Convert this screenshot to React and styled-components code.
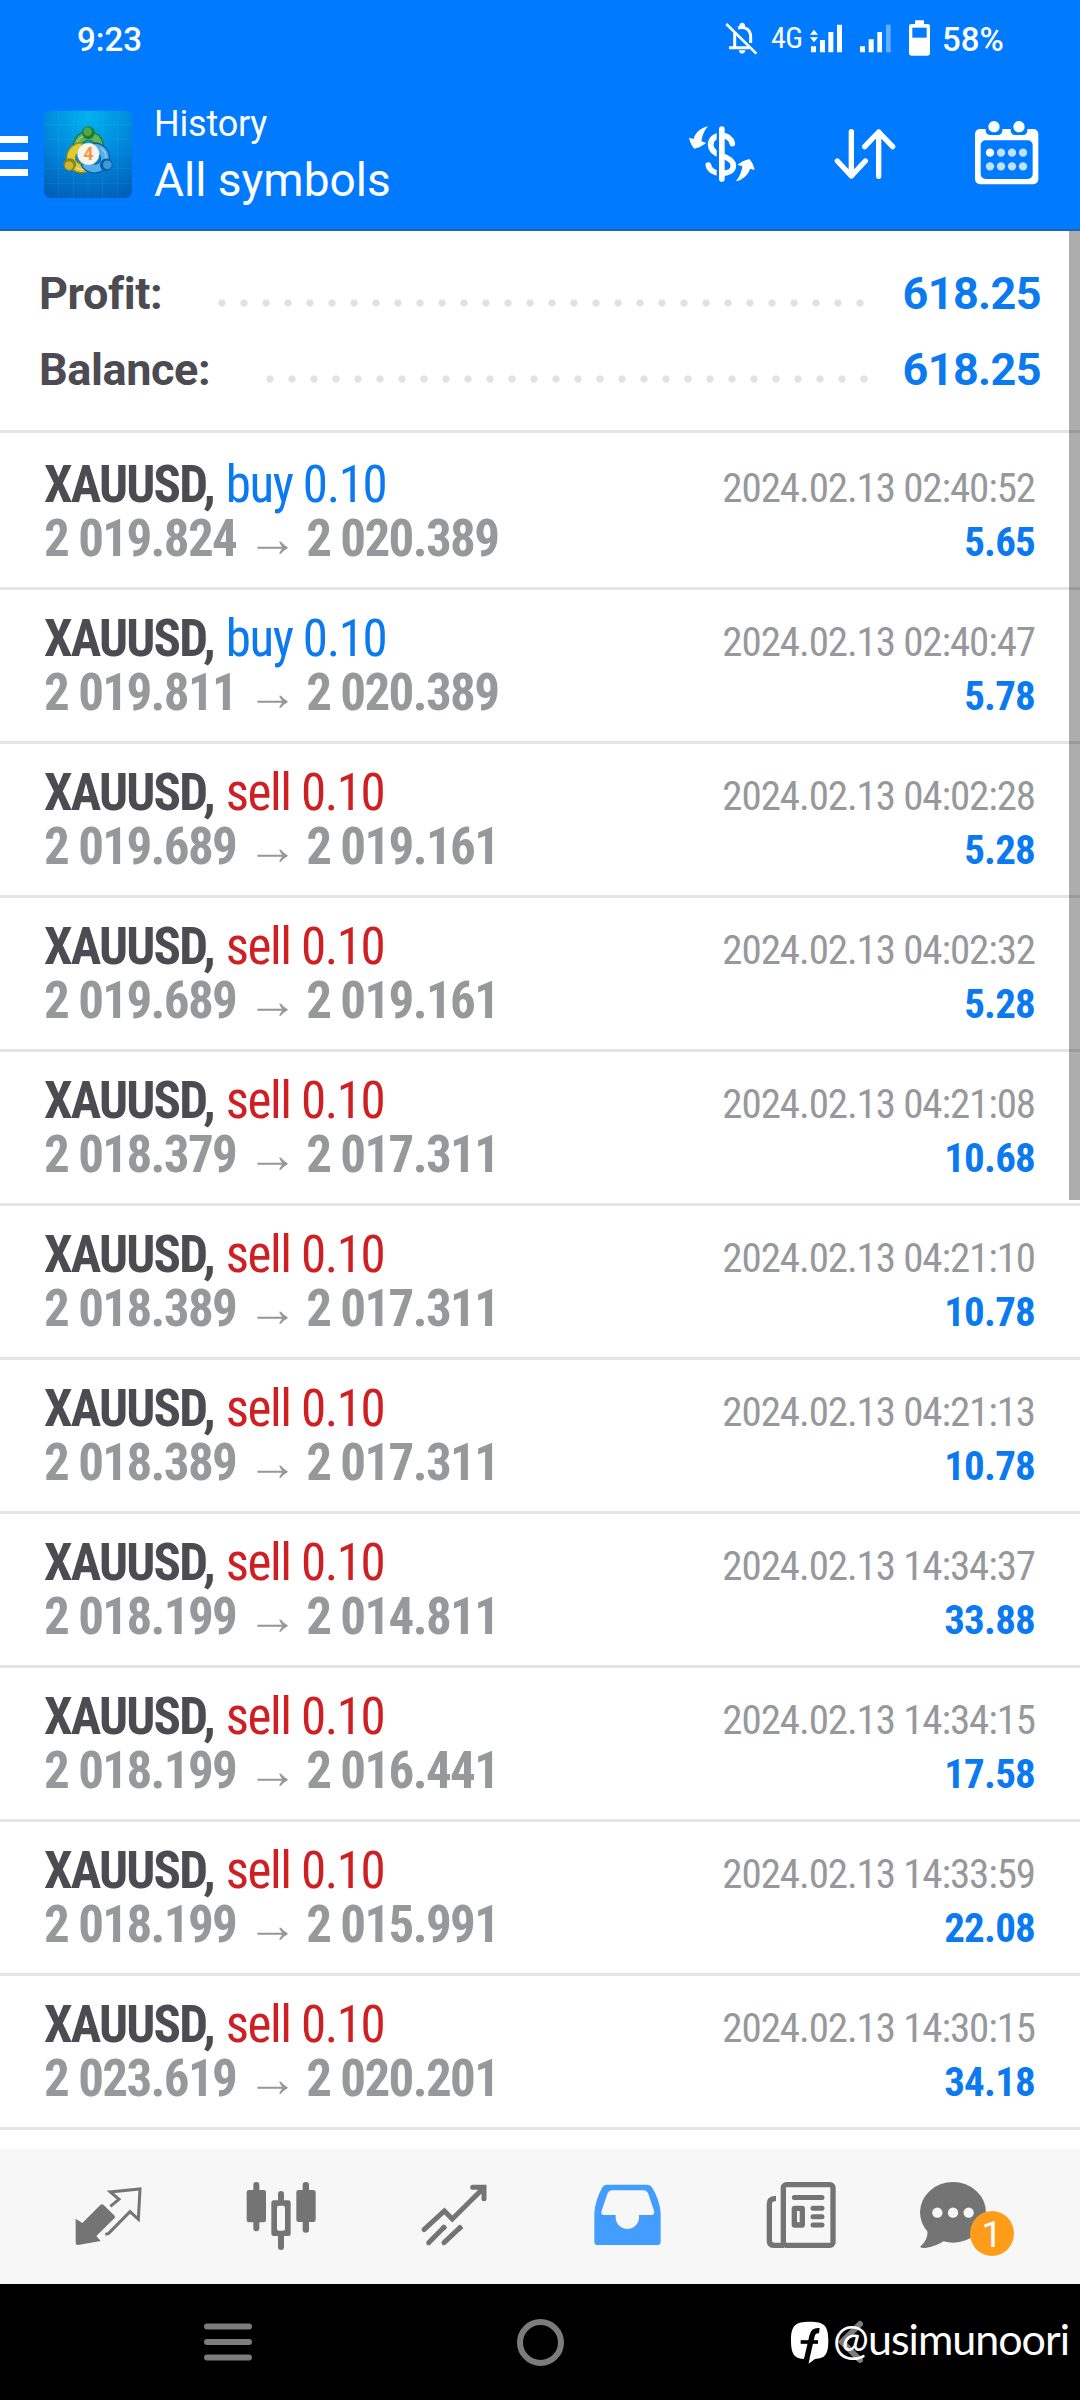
import React from "react"
import styled, { createGlobalStyle } from "styled-components"

const GlobalStyle = createGlobalStyle`
  :root {
    --primary: #007aff;
    --profit: #0b7af0;
    --sell: #ce1f23;
    --dark: #4c4b51;
    --muted: #97989c;
    --line: #e4e4e4;
    --tabIcon: #747474;
  }
  * {
    box-sizing: border-box;
  }
  body {
    margin: 0;
    background: #000;
    font-family: Roboto, "Liberation Sans", sans-serif;
  }
  svg {
    display: block;
    flex: none;
  }
`

const Screen = styled.div`
  position: relative;
  display: flex;
  flex-direction: column;
  width: 1080px;
  height: 2400px;
  overflow: hidden;
  background: #fff;
`

const StatusBar = styled.div`
  display: flex;
  align-items: center;
  height: 76px;
  padding: 0 77px 0 77px;
  background: var(--primary);
  color: #fff;
  font-size: 33px;
  font-weight: 500;
  line-height: 38px;
`

const Clock = styled.span`
  margin: 3px auto 0 0;
`

const Network = styled.span`
  width: 31px;
  margin: 0 7px 0 13px;
  font-family: "Roboto Condensed", Roboto, sans-serif;
  font-stretch: condensed;
  font-size: 30px;
  font-weight: 400;
  letter-spacing: -0.5px;
`

const Battery = styled.span`
  width: 61px;
  margin: 3px 0 0 11px;
`

const Spacer = styled.span`
  width: ${({ $w }) => $w}px;
`

const AppBar = styled.header`
  display: flex;
  align-items: center;
  height: 155px;
  padding: 3px 40px 0 0;
  background: var(--primary);
  border-bottom: 2px solid #1c65b4;
  color: #fff;
`

const Burger = styled.div`
  display: flex;
  flex-direction: column;
  gap: 9px;
  width: 28px;
  margin: 4px 16px 0 0;
  span {
    height: 7.5px;
    background: #fff;
  }
`

const Titles = styled.div`
  margin: 4px auto 0 22px;
  font-weight: 400;
`

const Section = styled.div`
  font-size: 36px;
  line-height: 48px;
  letter-spacing: -0.2px;
`

const Heading = styled.h1`
  margin: 0;
  font-size: 46px;
  font-weight: 400;
  line-height: 64px;
`

const Actions = styled.div`
  display: flex;
  align-items: center;
  gap: 76px;
`

const Content = styled.main`
  position: relative;
  flex: 1;
  overflow: hidden;
`

const Scrollbar = styled.div`
  position: absolute;
  top: 0;
  right: 0;
  width: 11px;
  height: 969px;
  background: rgba(0, 0, 0, 0.32);
`

const Summary = styled.section`
  height: 202px;
  padding: 25px 39px 0 39px;
  border-bottom: 3px solid var(--line);
`

const SummaryRow = styled.div`
  display: flex;
  height: 76px;
  font-size: 45px;
  font-weight: 700;
  line-height: 76px;
  letter-spacing: -0.4px;
  color: var(--dark);
`

const Dots = styled.span`
  flex: 1;
  margin: 0 33px 0 49px;
  background: radial-gradient(circle, #e2e2e2 3.3px, transparent 4px) 0 36px / 22px 22px repeat-x;
`

const SummaryValue = styled.span`
  color: var(--profit);
  letter-spacing: -0.6px;
`

const Trades = styled.ul`
  margin: 0;
  padding: 3px 0 0;
  list-style: none;
`

const Trade = styled.li`
  height: 154px;
  padding: 22px 44px 0;
  border-bottom: 3px solid var(--line);
  font-family: "Roboto Condensed", Roboto, sans-serif;
  font-stretch: condensed;
`

const TradeLine = styled.div`
  display: flex;
  justify-content: space-between;
  align-items: baseline;
  height: 54px;
  font-size: 51px;
  line-height: 54px;
  white-space: nowrap;
`

const Symbol = styled.span`
  color: var(--dark);
  font-weight: 700;
  letter-spacing: -1.8px;
`

const Side = styled.span`
  color: ${({ $side }) => ($side === "buy" ? "var(--profit)" : "var(--sell)")};
  font-weight: 400;
  letter-spacing: -1.4px;
`

const Prices = styled.span`
  color: var(--muted);
  font-weight: 700;
  letter-spacing: -1.65px;
`

const Arrow = styled.span`
  margin: 0 8px 0 11px;
  font-family: "Liberation Sans", sans-serif;
  font-size: 51px;
  font-weight: 400;
  line-height: 40px;
  letter-spacing: 0;
`

const Time = styled.span`
  padding-right: 1px;
  color: var(--muted);
  font-size: 41px;
  font-weight: 400;
  line-height: 40px;
  letter-spacing: -1.1px;
`

const Amount = styled.span`
  padding-right: 1px;
  color: var(--profit);
  font-size: 41px;
  font-weight: 700;
  line-height: 40px;
  letter-spacing: -0.8px;
`

const TabBar = styled.nav`
  display: flex;
  height: 135px;
  padding: 0 21px;
  background: #f7f7f7;
  color: var(--tabIcon);
`

const Tab = styled.div`
  position: relative;
  display: flex;
  justify-content: center;
  align-items: center;
  width: 173px;
  color: ${({ $active }) => ($active ? "#429dff" : "inherit")};
  svg {
    overflow: visible;
  }
`

const Badge = styled.span`
  position: absolute;
  left: 84px;
  top: 62px;
  width: 44px;
  height: 45px;
  border-radius: 50%;
  background: #ff9d1a;
  color: #fff;
  font-size: 37px;
  line-height: 48px;
  text-align: center;
`

const NavBar = styled.div`
  display: flex;
  justify-content: space-between;
  align-items: center;
  height: 116px;
  padding: 0 204px;
  background: #000;
`

const Watermark = styled.div`
  position: absolute;
  left: 791px;
  bottom: 35px;
  display: flex;
  align-items: flex-start;
  gap: 4px;
  height: 44px;
  color: #fff;
  font-family: Lato, "Open Sans", sans-serif;
  font-size: 43px;
  line-height: 36px;
  letter-spacing: -1px;
`

const BellOff = () => (
  <svg width="34" height="36" viewBox="132 30 102 108" fill="none" stroke="#fff" strokeWidth="9">
    <path d="M164 68V113M147 113H208M174 54C196 48 212 60 212 80V99" />
    <path d="M139 42L229 131" strokeWidth="8" />
    <path d="M177 121H196Q195 131 186 131Q178 131 177 121ZM178 54V46Q179 38 186 38Q194 38 195 46V54Z" fill="#fff" stroke="none" />
  </svg>
)

const SignalData = () => (
  <svg width="34" height="32" viewBox="387 36 102 96" fill="#fff">
    <path d="M402 59L414 74H390ZM390 82H414L402 97Z" />
    <path d="M393 109h15v18h-15zM420 90h15v37h-15zM445 66h15v61h-15zM471 44h15v83h-15z" />
  </svg>
)

const Signal = () => (
  <svg width="33" height="32" viewBox="537 36 99 96" fill="#fff">
    <path d="M540 109h15v18h-15zM566 88h15v39h-15zM592 66h14v61h-14z" />
    <path d="M618 44h14v83h-14z" opacity=".4" />
  </svg>
)

const BatteryIcon = () => (
  <svg width="23" height="38" viewBox="684 27 69 114">
    <rect x="687" y="42" width="63" height="95" rx="7" fill="#fff" />
    <rect x="705" y="31" width="27" height="16" rx="2" fill="#fff" />
    <rect x="697" y="53" width="43" height="30" fill="#007aff" />
  </svg>
)

const figure = (x, y, rotate, light, dark) => (
  <g transform={`translate(${x} ${y}) rotate(${rotate})`}>
    <path d="M-38 48A45 45 0 1 1 38 48L14 32A17 17 0 1 0 -14 32Z" fill={light} stroke={dark} strokeWidth="4" />
    <path d="M-36 24A36 36 0 0 1 -12 -8" fill="none" stroke="#fff" strokeOpacity=".5" strokeWidth="3" />
    <circle cx="0" cy="-17" r="19" fill={dark} />
    <circle cx="-2" cy="-20" r="13" fill={light} opacity=".75" />
  </g>
)

const Logo = () => (
  <svg width="88" height="88" viewBox="42 60 264 264">
    <defs>
      <radialGradient id="logoBg" cx=".5" cy=".05" r="1">
        <stop offset="0" stopColor="#00b4ec" />
        <stop offset=".5" stopColor="#0089dc" />
        <stop offset="1" stopColor="#005fb8" />
      </radialGradient>
    </defs>
    <rect x="42" y="62" width="264" height="262" rx="20" fill="url(#logoBg)" />
    <path
      d="M86 62V324M130 62V324M174 62V324M218 62V324M262 62V324M42 104H306M42 148H306M42 192H306M42 236H306M42 280H306"
      stroke="#5fc6ff"
      strokeOpacity=".18"
      strokeWidth="2"
    />
    {figure(175, 145, 0, "#5fb553", "#1f7a35")}
    {figure(134, 215, -120, "#d9cb3a", "#8c8418")}
    {figure(214, 216, 120, "#4fb0ea", "#0c5da5")}
    <circle cx="175" cy="192" r="33" fill="#f6f4f2" stroke="#aaa" strokeWidth="1" />
    <text x="175" y="211" textAnchor="middle" fontFamily="Roboto" fontWeight="700" fontSize="54" fill="#f59a3c">
      4
    </text>
  </svg>
)

const CurrencyIcon = () => {
  const arrow = "M84 349C62 354 46 368 41 387L27 383Q32 405 43 416Q61 413 79 399L64 394C66 378 73 360 84 349Z"
  return (
    <svg width="70" height="60" viewBox="21 342 210 180" fill="none">
      <path
        d="M157 401C154 386 142 377 125 376C105 376 92 388 92 404C92 423 107 431 125 437C147 444 160 452 160 467C160 482 145 490 125 490C104 490 88 481 85 465"
        stroke="#fff"
        strokeWidth="17"
        strokeLinecap="round"
      />
      <path d="M113.500 355V510" stroke="#007aff" strokeWidth="7" />
      <path d="M125.500 357V507" stroke="#fff" strokeWidth="17" strokeLinecap="round" />
      <path d={arrow} fill="#fff" />
      <path d={arrow} fill="#fff" transform="rotate(180 125.500 431.500)" />
    </svg>
  )
}

const SortIcon = () => (
  <svg
    width="64"
    height="60"
    viewBox="459 342 192 180"
    fill="none"
    stroke="#fff"
    strokeWidth="16"
    strokeLinecap="round"
    strokeLinejoin="round"
  >
    <path d="M514 365V498M472 453L514 498L556 453" />
    <path d="M596 499V366M554 410L596 366L638 410" />
  </svg>
)

const CalendarIcon = () => (
  <svg width="67" height="70" viewBox="879 327 201 210">
    <rect x="885" y="357" width="190" height="166" rx="15" fill="#fff" />
    <rect x="902" y="391" width="156" height="116" rx="15" fill="#007aff" />
    {[942, 1017].map(x => (
      <g key={x}>
        <path d={`M${x - 25} 350V362Q${x - 23} 375 ${x - 12} 375H${x + 12}Q${x + 23} 375 ${x + 25} 362V350Z`} fill="#007aff" />
        <circle cx={x} cy="350" r="17" fill="#fff" />
      </g>
    ))}
    {[428, 469].map(y =>
      [930, 963, 996, 1029].map(x => (
        <circle key={`${x}-${y}`} cx={x} cy={y} r="12.500" fill={x === 930 && y === 428 ? "#fff" : "#bfe0ff"} />
      ))
    )}
  </svg>
)

const QuotesIcon = () => (
  <svg width="81" height="81" viewBox="21 18 243 243">
    <path d="M47 146L67 159L121 105Q126 100 131 105L164 137Q167 141 163 145L109 198L122 213L54 225Q47 225 47 218Z" fill="currentColor" />
    <path d="M151 109L177 88L151 66L240 57L235 148L210 125L146 190L136 193" fill="none" stroke="currentColor" strokeWidth="9" />
  </svg>
)

const ChartIcon = () => (
  <svg width="81" height="81" viewBox="540 18 243 243" fill="currentColor">
    <rect x="560" y="60" width="58" height="97" rx="7" />
    <rect x="580" y="36" width="18" height="148" rx="9" />
    <path d="M641 91H685Q692 91 692 98V191Q692 198 685 198H641Q634 198 634 191V98Q634 91 641 91ZM657 107Q651 107 651 113V176Q651 182 657 182H669Q675 182 675 176V113Q675 107 669 107Z" fillRule="evenodd" />
    <path d="M654 94V72A9 9 0 0 1 672 72V94ZM654 195V231A9 9 0 0 0 672 231V195Z" />
    <rect x="709" y="60" width="58" height="96" rx="7" />
    <rect x="728" y="36" width="19" height="152" rx="9" />
  </svg>
)

const TrendIcon = () => (
  <svg width="81" height="81" viewBox="1059 18 243 243" fill="none" stroke="currentColor" strokeWidth="15" strokeLinecap="round">
    <path d="M1092 179L1153 123L1177 147L1270 55M1238 52H1272V86" />
    <path d="M1106 218L1152 172M1152 218L1200 173" />
    <path d="M1148 176L1156 168M1196 177L1205 169" strokeLinecap="butt" />
  </svg>
)

const InboxIcon = () => (
  <svg width="81" height="81" viewBox="18 18 243 243">
    <path
      d="M80 44H202Q211 44 216 52Q240 92 242 130V215Q242 225 232 225H53Q43 225 43 215V130Q45 92 67 52Q71 44 80 44ZM96 61Q87 61 83 69L65 122Q61 135 72 135H107V142A35 35 0 0 0 177 142V135H213Q225 135 222 122L204 69Q200 61 191 61Z"
      fill="currentColor"
      fillRule="evenodd"
    />
  </svg>
)

const NewsIcon = () => (
  <svg width="81" height="81" viewBox="537 18 243 243" fill="none" stroke="currentColor" strokeWidth="16">
    <rect x="610" y="44" width="149" height="182" rx="9" />
    <path d="M588 86H583Q568 87 568 101V212Q568 226 583 226H612" />
    <rect x="643" y="115" width="24" height="50" rx="1" />
    <path d="M643 82.500H726M699 115H726M699 140H726M699 165H726" strokeWidth="15" strokeLinecap="round" />
  </svg>
)

const ChatIcon = () => (
  <svg width="81" height="81" viewBox="1056 18 243 243">
    <ellipse cx="1119" cy="127" rx="99" ry="91" fill="currentColor" />
    <path d="M1042 178Q1047 207 1020 231Q1026 235 1040 233Q1068 229 1092 213Z" fill="currentColor" />
    {[1072, 1119, 1166].map(x => (
      <circle key={x} cx={x} cy="128" r="15.500" fill="#f7f7f7" />
    ))}
  </svg>
)

const FacebookIcon = () => (
  <svg width="38" height="44" viewBox="33 35 114 132">
    <path d="M89 37C132 37 145 48 145 93C145 136 135 148 105 149L86 163L88 149H70C42 147 33 134 33 93C33 48 46 37 89 37Z" fill="#fff" />
    <path d="M118 64Q100 62 96 80L79 154" fill="none" stroke="#000" strokeWidth="16" />
    <path d="M62 98H114" stroke="#000" strokeWidth="11" />
  </svg>
)

const trades = [
  ["buy", "2 019.824", "2 020.389", "02:40:52", "5.65"],
  ["buy", "2 019.811", "2 020.389", "02:40:47", "5.78"],
  ["sell", "2 019.689", "2 019.161", "04:02:28", "5.28"],
  ["sell", "2 019.689", "2 019.161", "04:02:32", "5.28"],
  ["sell", "2 018.379", "2 017.311", "04:21:08", "10.68"],
  ["sell", "2 018.389", "2 017.311", "04:21:10", "10.78"],
  ["sell", "2 018.389", "2 017.311", "04:21:13", "10.78"],
  ["sell", "2 018.199", "2 014.811", "14:34:37", "33.88"],
  ["sell", "2 018.199", "2 016.441", "14:34:15", "17.58"],
  ["sell", "2 018.199", "2 015.991", "14:33:59", "22.08"],
  ["sell", "2 023.619", "2 020.201", "14:30:15", "34.18"],
]

const App = () => (
  <>
    <GlobalStyle />
    <Screen>
      <StatusBar>
        <Clock>9:23</Clock>
        <BellOff />
        <Network>4G</Network>
        <SignalData />
        <Spacer $w={16} />
        <Signal />
        <Spacer $w={16} />
        <BatteryIcon />
        <Battery>58%</Battery>
      </StatusBar>

      <AppBar>
        <Burger>
          <span />
          <span />
          <span />
        </Burger>
        <Logo />
        <Titles>
          <Section>History</Section>
          <Heading>All symbols</Heading>
        </Titles>
        <Actions>
          <CurrencyIcon />
          <SortIcon />
          <CalendarIcon />
        </Actions>
      </AppBar>

      <Content>
        <Summary>
          <SummaryRow>
            Profit:
            <Dots />
            <SummaryValue>618.25</SummaryValue>
          </SummaryRow>
          <SummaryRow>
            Balance:
            <Dots />
            <SummaryValue>618.25</SummaryValue>
          </SummaryRow>
        </Summary>
        <Trades>
          {trades.map(([side, open, close, time, amount]) => (
            <Trade key={time}>
              <TradeLine>
                <span>
                  <Symbol>XAUUSD,</Symbol> <Side $side={side}>{side} 0.10</Side>
                </span>
                <Time>2024.02.13 {time}</Time>
              </TradeLine>
              <TradeLine>
                <Prices>
                  {open}
                  <Arrow>→</Arrow>
                  {close}
                </Prices>
                <Amount>{amount}</Amount>
              </TradeLine>
            </Trade>
          ))}
        </Trades>
        <Scrollbar />
      </Content>

      <TabBar>
        <Tab>
          <QuotesIcon />
        </Tab>
        <Tab>
          <ChartIcon />
        </Tab>
        <Tab>
          <TrendIcon />
        </Tab>
        <Tab $active>
          <InboxIcon />
        </Tab>
        <Tab>
          <NewsIcon />
        </Tab>
        <Tab>
          <ChatIcon />
          <Badge>1</Badge>
        </Tab>
      </TabBar>

      <NavBar>
        <svg width="48" height="48" viewBox="0 0 48 48" stroke="#7c7c7c" strokeWidth="6" strokeLinecap="round">
          <path d="M3 8.500H45M3 24H45M3 39.500H45" />
        </svg>
        <svg width="48" height="48" viewBox="0 0 48 48" fill="none" stroke="#7c7c7c" strokeWidth="6">
          <circle cx="24.500" cy="24.500" r="20.500" />
        </svg>
        <svg width="48" height="48" viewBox="0 0 48 48" fill="none" stroke="#7c7c7c" strokeWidth="6" strokeLinecap="round">
          <path d="M32 6L14 24L32 42" />
        </svg>
      </NavBar>

      <Watermark>
        <FacebookIcon />
        <span>@usimunoori</span>
      </Watermark>
    </Screen>
  </>
)

export default App
